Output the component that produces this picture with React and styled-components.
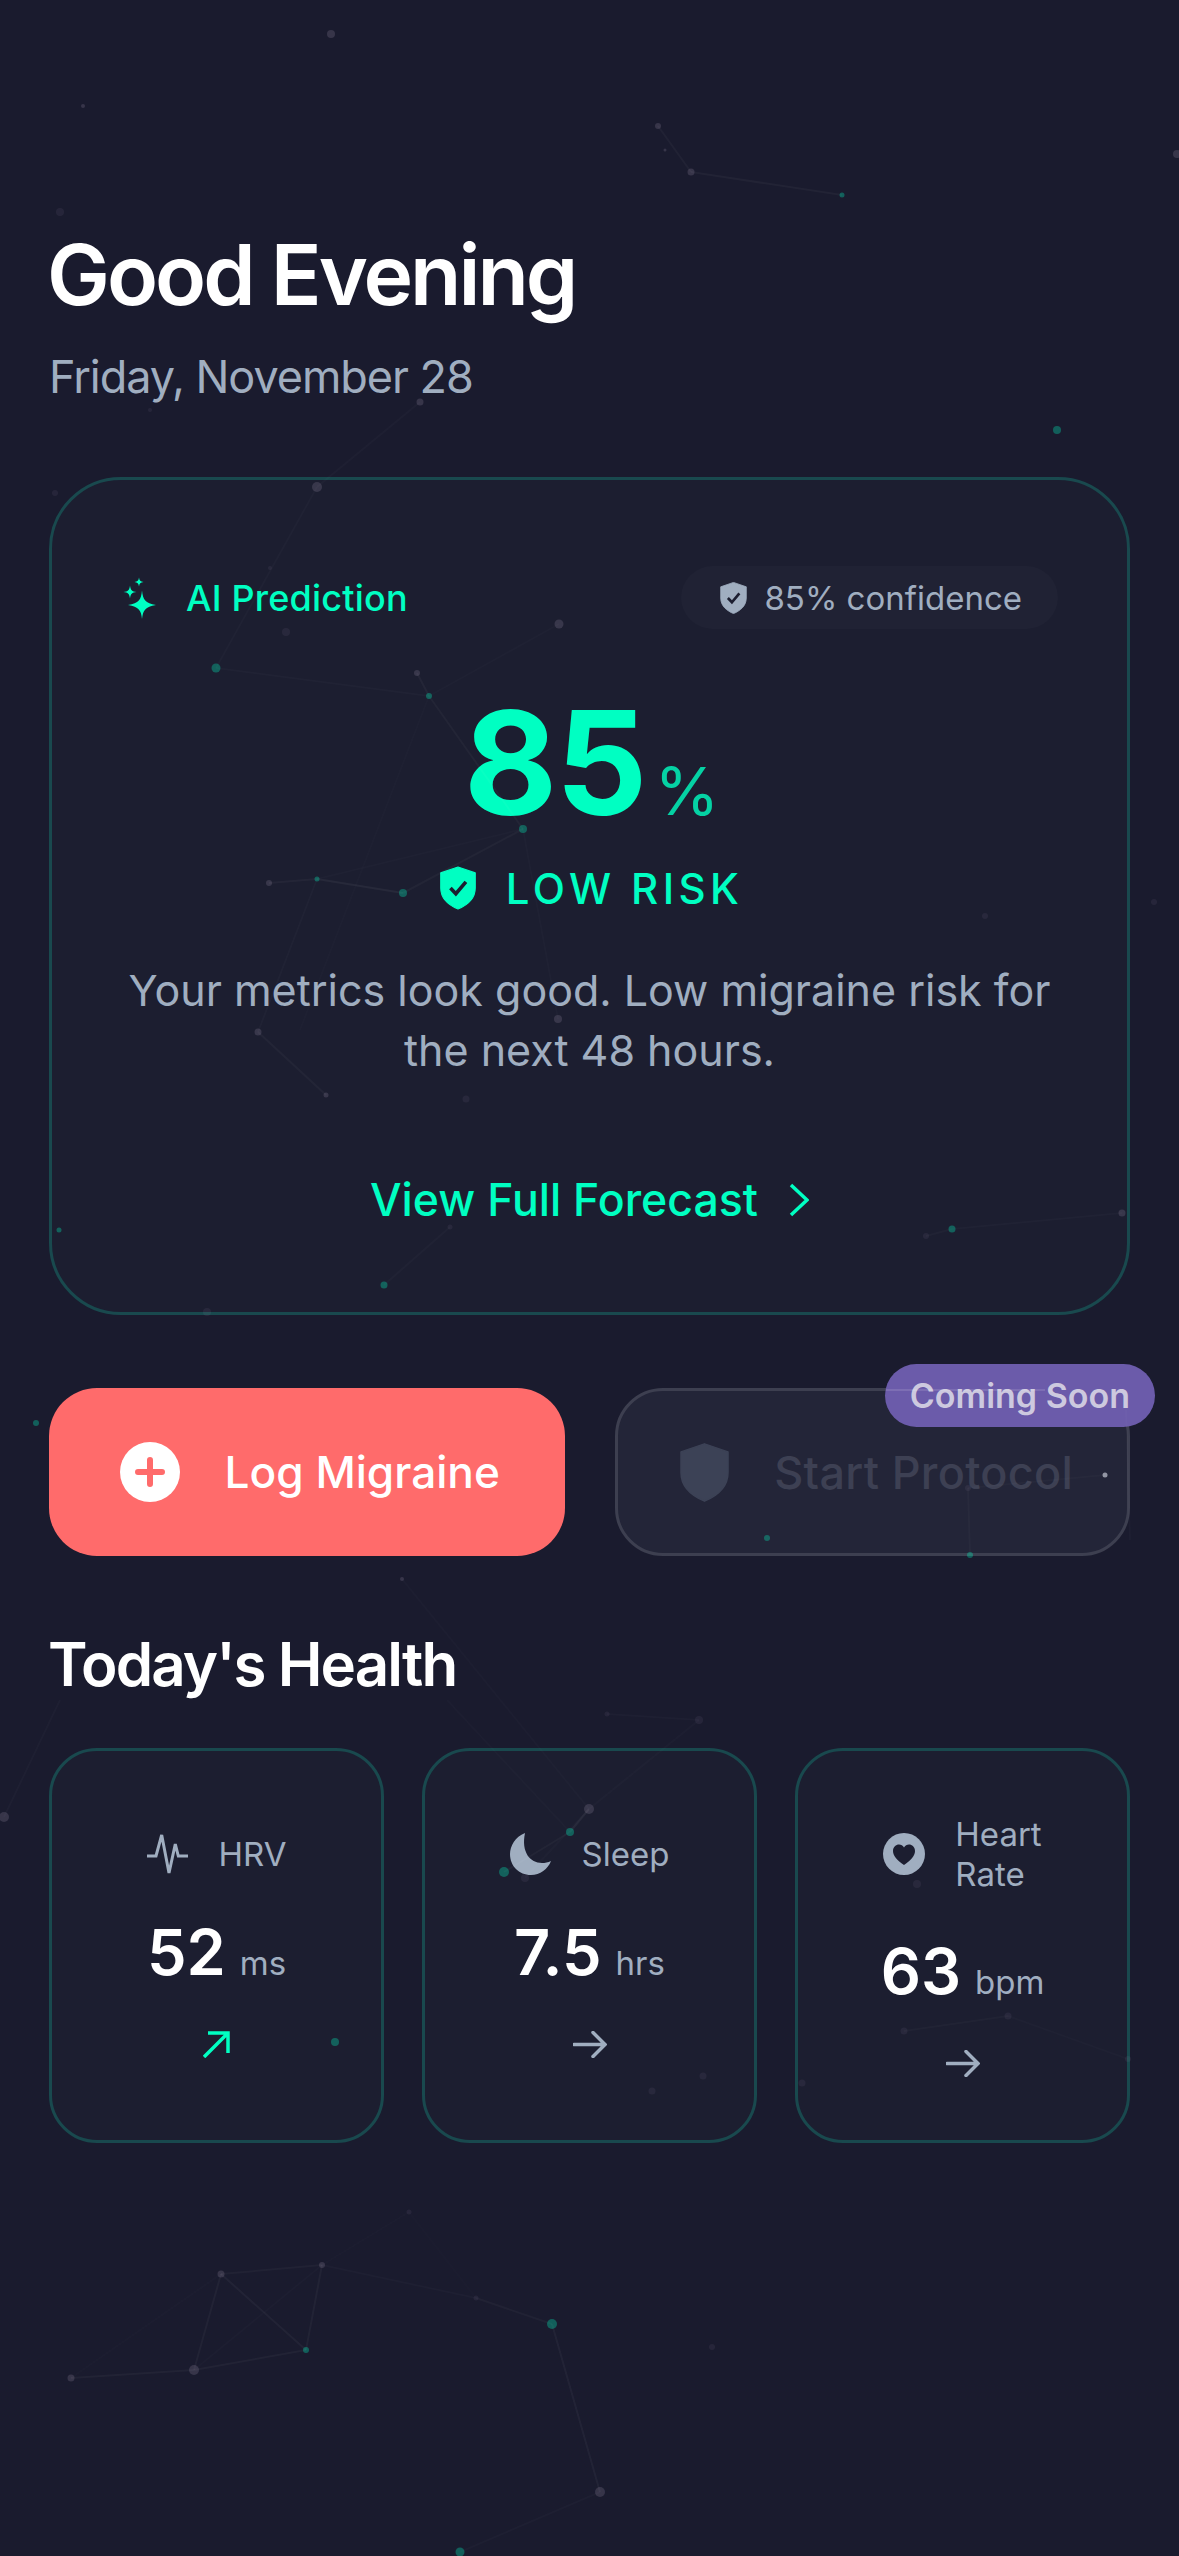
import React from 'react';
import styled, { createGlobalStyle } from 'styled-components';

const TEAL = '#00ffc2';
const GREY = '#a0aec0';
const BG = '#1a1b2e';
const CARD = '#1c1e30';

const GlobalStyle = createGlobalStyle`
  html, body {
    margin: 0;
    padding: 0;
    background: ${BG};
  }
  * {
    box-sizing: border-box;
  }
`;

// t = teal node, g = grey node
const nodes = [
  [331, 34, 4, 'g'], [83, 106, 2, 'g'], [658, 126, 3, 'g'], [665, 150, 1.5, 'g'], [691, 172, 3.5, 'g'],
  [842, 195, 2.5, 't'], [1177, 154, 4, 'g'], [60, 212, 4, 'f'], [420, 402, 3.5, 'g'], [150, 410, 2, 'f'],
  [1057, 430, 4, 't'], [317, 487, 5, 'g'], [55, 493, 3, 'f'], [216, 668, 4.5, 't'], [417, 673, 3, 'g'],
  [559, 624, 4.5, 'g'], [286, 632, 4, 'f'], [429, 696, 3, 't'], [270, 568, 2, 'f'], [523, 829, 4, 't'],
  [317, 879, 2.5, 't'], [269, 883, 3, 'g'], [403, 893, 4, 't'], [985, 916, 3, 'f'], [1154, 902, 3, 'f'],
  [558, 1019, 4, 'g'], [258, 1032, 3.5, 'g'], [326, 1095, 2.5, 'g'], [466, 1099, 3.5, 'f'],
  [59, 1230, 2.5, 't'], [450, 1227, 2.5, 'f'], [384, 1285, 3.5, 't'], [207, 1312, 4, 'f'],
  [926, 1236, 3, 'f'], [952, 1229, 3.5, 't'], [1122, 1213, 3.5, 'g'], [36, 1423, 3, 't'],
  [1105, 1475, 2.5, 'w'], [968, 1488, 3, 'f'], [767, 1538, 3, 't'], [970, 1555, 3, 't'], [402, 1579, 2, 'g'],
  [607, 1714, 2.5, 'f'], [699, 1720, 4, 'f'], [4, 1817, 5, 'g'], [589, 1809, 5, 'g'], [570, 1832, 4, 't'],
  [504, 1872, 5, 't'], [525, 1878, 4, 'f'], [917, 1884, 4, 'f'], [335, 2042, 4, 't'], [703, 2076, 3.5, 'f'],
  [652, 2091, 3.5, 'f'], [1008, 2016, 3.5, 'f'], [904, 2031, 3.5, 'f'], [1128, 2059, 3, 'f'], [802, 2083, 3.5, 'f'],
  [409, 2212, 2.5, 'f'], [322, 2265, 3, 'g'], [221, 2274, 3.5, 'g'], [476, 2298, 2.5, 'f'], [552, 2324, 5, 't'],
  [306, 2350, 3, 't'], [194, 2370, 5, 'g'], [71, 2378, 3.5, 'g'], [600, 2492, 5, 'g'], [460, 2552, 4.5, 't'],
  [712, 2347, 3, 'f'],
];

// x1, y1, x2, y2, opacity
const links = [
  [658, 126, 691, 172, 0.03], [691, 172, 842, 195, 0.035], [420, 402, 317, 487, 0.02], [317, 487, 216, 668, 0.018],
  [216, 668, 429, 696, 0.018], [417, 673, 429, 696, 0.035], [559, 624, 429, 696, 0.015], [429, 696, 523, 829, 0.03],
  [269, 883, 317, 879, 0.035], [317, 879, 403, 893, 0.05], [403, 893, 523, 829, 0.03], [317, 879, 523, 829, 0.015],
  [317, 879, 258, 1032, 0.02], [258, 1032, 326, 1095, 0.03], [429, 696, 300, 1030, 0.012], [523, 829, 558, 1019, 0.015],
  [450, 1227, 384, 1285, 0.02], [926, 1236, 952, 1229, 0.025], [952, 1229, 1122, 1213, 0.018],
  [968, 1488, 970, 1555, 0.025], [1105, 1475, 968, 1488, 0.02], [886, 1390, 1045, 1390, 0.12],
  [1126, 1410, 1130, 1540, 0.02], [402, 1579, 589, 1809, 0.015], [447, 1700, 570, 1832, 0.015],
  [607, 1714, 699, 1720, 0.02], [699, 1720, 589, 1809, 0.015], [589, 1809, 570, 1832, 0.05], [570, 1832, 504, 1872, 0.03],
  [589, 1809, 525, 1878, 0.015], [60, 1700, 4, 1817, 0.02], [904, 2031, 1008, 2016, 0.025], [1008, 2016, 1128, 2059, 0.015],
  [409, 2212, 322, 2265, 0.012], [322, 2265, 221, 2274, 0.03], [221, 2274, 306, 2350, 0.04], [322, 2265, 306, 2350, 0.035],
  [221, 2274, 194, 2370, 0.035], [322, 2265, 194, 2370, 0.015], [221, 2274, 71, 2378, 0.012], [71, 2378, 194, 2370, 0.035],
  [194, 2370, 306, 2350, 0.035], [322, 2265, 476, 2298, 0.02], [476, 2298, 552, 2324, 0.03], [552, 2324, 600, 2492, 0.04],
  [600, 2492, 460, 2552, 0.02], [409, 2212, 476, 2298, 0.008],
];

const nodeFill = {
  t: 'rgba(0, 255, 194, 0.3)',
  g: 'rgba(190, 170, 200, 0.18)',
  f: 'rgba(190, 170, 200, 0.08)',
  w: 'rgba(220, 225, 235, 0.6)',
};

function Particles() {
  return (
    <Canvas viewBox="0 0 1179 2556" width="1179" height="2556">
      {links.map(([x1, y1, x2, y2, o], i) => (
        <line key={i} x1={x1} y1={y1} x2={x2} y2={y2} stroke="#fff" strokeOpacity={o} strokeWidth="2" />
      ))}
      {nodes.map(([x, y, r, kind], i) => (
        <circle key={i} cx={x} cy={y} r={r} fill={nodeFill[kind]} />
      ))}
    </Canvas>
  );
}

function Sparkles() {
  return (
    <svg width="40" height="42" viewBox="0 0 40 42" fill={TEAL}>
      <path d="M21 13.5 C22 23 24 26 35 28 C24 30 22 33 21 42 C20 33 18 30 7 28 C18 26 20 23 21 13.5 Z" />
      <path d="M9 8.5 C9.5 13 11 14.5 15.5 15 C11 15.5 9.5 17 9 21.5 C8.5 17 7 15.5 2.5 15 C7 14.5 8.5 13 9 8.5 Z" />
      <path d="M18 .5 C18.4 3.5 19.5 4.6 22.5 5 C19.5 5.4 18.4 6.5 18 9.5 C17.6 6.5 16.5 5.4 13.5 5 C16.5 4.6 17.6 3.5 18 .5 Z" />
    </svg>
  );
}

function Shield({ width, height, fill, check }) {
  return (
    <svg width={width} height={height} viewBox="0 0 20 24">
      <path
        d="M10 .3 L19.6 3.6 V12 C19.6 18 15 21.6 10 23.7 C5 21.6 .4 18 .4 12 V3.6 Z"
        fill={fill}
        stroke={fill}
        strokeWidth=".6"
        strokeLinejoin="round"
      />
      {check && <path d="M5.8 12 L8.8 15.2 L14.4 8.6" fill="none" stroke={check} strokeWidth="2" />}
    </svg>
  );
}

function Chevron() {
  return (
    <svg width="20" height="34" viewBox="0 0 20 34" fill="none" stroke={TEAL} strokeWidth="3.5">
      <path d="M2 2 L18 17 L2 32" />
    </svg>
  );
}

function PlusCircle() {
  return (
    <svg width="60" height="60" viewBox="0 0 60 60">
      <circle cx="30" cy="30" r="30" fill="#fff" />
      <path d="M30 18 V42 M18 30 H42" stroke="#ff6b6b" strokeWidth="6" strokeLinecap="round" />
    </svg>
  );
}

function Pulse() {
  return (
    <svg width="42" height="42" viewBox="0 0 42 42" fill="none" stroke={GREY} strokeWidth="3">
      <path d="M0 23 H9 L14.7 2 L22 40 L28.3 11 L31.3 23 H41" />
    </svg>
  );
}

function Moon() {
  return (
    <svg width="42" height="42" viewBox="0 0 42 42" fill={GREY}>
      <path d="M15 0 C5 4 0 13 0 21 C0 33 9 42 21 42 C30 42 38 36 41 28 C38 29.5 35 30 32 30 C20 30 11 19 15 0 Z" />
    </svg>
  );
}

function HeartBadge() {
  return (
    <svg width="42" height="42" viewBox="0 0 42 42">
      <circle cx="21" cy="21" r="21" fill={GREY} />
      <path
        d="M21 32 C14 27 10 23 10 18 C10 14 13 11.5 16 11.5 C18 11.5 20 12.5 21 14.5 C22 12.5 24 11.5 26 11.5 C29 11.5 32 14 32 18 C32 23 28 27 21 32 Z"
        fill={CARD}
      />
    </svg>
  );
}

function ArrowUpRight() {
  return (
    <svg width="27" height="27" viewBox="0 0 27 27" fill="none" stroke={TEAL} strokeWidth="3.5">
      <path d="M1 26 L24 3 M5 2 H25 V22" />
    </svg>
  );
}

function ArrowRight() {
  return (
    <svg width="34" height="27" viewBox="0 0 34 27" fill="none" stroke={GREY} strokeWidth="3.5" strokeLinecap="round">
      <path d="M1 13.5 H32 M20 1.5 L32 13.5 L20 25.5" />
    </svg>
  );
}

const metrics = [
  { id: 'hrv', icon: <Pulse />, label: 'HRV', value: '52', unit: 'ms', trend: <ArrowUpRight /> },
  { id: 'sleep', icon: <Moon />, label: 'Sleep', value: '7.5', unit: 'hrs', trend: <ArrowRight /> },
  { id: 'heart', icon: <HeartBadge />, label: 'Heart Rate', value: '63', unit: 'bpm', trend: <ArrowRight /> },
];

export default function App() {
  return (
    <Screen>
      <GlobalStyle />
      <Content>
        <Title>Good Evening</Title>
        <DateLine>Friday, November 28</DateLine>

        <PredictionCard>
          <CardHeader>
            <AiTag>
              <Sparkles />
              AI Prediction
            </AiTag>
            <Confidence>
              <Shield width={27} height={32} fill={GREY} check={CARD} />
              85% confidence
            </Confidence>
          </CardHeader>

          <Score>
            <ScoreValue>85</ScoreValue>
            <ScoreUnit>%</ScoreUnit>
          </Score>

          <Risk>
            <Shield width={36} height={44} fill={TEAL} check={CARD} />
            LOW RISK
          </Risk>

          <Summary>
            Your metrics look good. Low migraine risk for
            <br />
            the next 48 hours.
          </Summary>

          <ForecastLink>
            View Full Forecast
            <Chevron />
          </ForecastLink>
        </PredictionCard>

        <Actions>
          <LogButton>
            <PlusCircle />
            Log Migraine
          </LogButton>
          <ProtocolButton>
            <Shield width={49} height={59} fill="#3c4256" />
            Start Protocol
            <SoonBadge>Coming Soon</SoonBadge>
          </ProtocolButton>
        </Actions>

        <SectionTitle>Today's Health</SectionTitle>

        <MetricGrid>
          {metrics.map((m) => (
            <MetricCard key={m.id}>
              <MetricHead>
                {m.icon}
                <MetricLabel>{m.label}</MetricLabel>
              </MetricHead>
              <MetricValueRow>
                <MetricValue>{m.value}</MetricValue>
                <MetricUnit>{m.unit}</MetricUnit>
              </MetricValueRow>
              <MetricTrend>{m.trend}</MetricTrend>
            </MetricCard>
          ))}
        </MetricGrid>
      </Content>
      <Particles />
    </Screen>
  );
}

const Screen = styled.div`
  position: relative;
  width: 1179px;
  height: 2556px;
  overflow: hidden;
  background: ${BG};
  font-family: Inter, 'Liberation Sans', sans-serif;
`;

const Canvas = styled.svg`
  position: absolute;
  top: 0;
  left: 0;
  pointer-events: none;
`;

const Content = styled.div`
  padding: 225px 49px 0;
`;

const Title = styled.h1`
  margin: 0 0 0 -2px;
  font-size: 84px;
  line-height: 100px;
  font-weight: 600;
  letter-spacing: -3px;
  color: #fff;
`;

const DateLine = styled.div`
  margin-top: 22px;
  font-size: 45px;
  line-height: 60px;
  letter-spacing: -1.05px;
  color: ${GREY};
`;

const PredictionCard = styled.section`
  margin-top: 70px;
  padding: 86px 69px 82px;
  border: 3px solid #19494e;
  border-radius: 72px;
  background: ${CARD};
`;

const CardHeader = styled.div`
  display: flex;
  align-items: center;
  justify-content: space-between;
  height: 63px;
`;

const AiTag = styled.div`
  display: flex;
  align-items: center;
  gap: 25px;
  font-size: 36px;
  font-weight: 500;
  letter-spacing: 0.2px;
  color: ${TEAL};
`;

const Confidence = styled.div`
  display: flex;
  align-items: center;
  gap: 17px;
  height: 63px;
  padding: 0 36px 0 39px;
  border-radius: 32px;
  background: rgba(255, 255, 255, 0.02);
  font-size: 33px;
  color: ${GREY};
`;

const Score = styled.div`
  display: flex;
  align-items: baseline;
  justify-content: center;
  gap: 9px;
  margin-top: 62px;
  padding-left: 2px;
  height: 144px;
  letter-spacing: -2px;
`;

const ScoreValue = styled.span`
  font-size: 144px;
  line-height: 144px;
  font-weight: 700;
  color: ${TEAL};
`;

const ScoreUnit = styled.span`
  font-size: 66px;
  line-height: 1;
  font-weight: 400;
  color: ${TEAL};
  opacity: 0.8;
`;

const Risk = styled.div`
  display: flex;
  align-items: center;
  justify-content: center;
  gap: 30px;
  margin-top: 27px;
  padding-left: 4px;
  height: 52px;
  font-size: 42px;
  font-weight: 500;
  letter-spacing: 4.4px;
  color: ${TEAL};
`;

const Summary = styled.p`
  margin: 46px -30px 0;
  font-size: 43px;
  line-height: 60px;
  text-align: center;
  color: ${GREY};
`;

const ForecastLink = styled.div`
  display: flex;
  align-items: center;
  justify-content: center;
  gap: 31px;
  margin-top: 90px;
  height: 60px;
  font-size: 44.6px;
  font-weight: 500;
  color: ${TEAL};
`;

const Actions = styled.div`
  display: grid;
  grid-template-columns: 1fr 1fr;
  gap: 50px;
  margin-top: 73px;
`;

const ActionButton = styled.div`
  display: flex;
  align-items: center;
  justify-content: center;
  gap: 45px;
  height: 168px;
  border-radius: 48px;
  font-weight: 500;
`;

const LogButton = styled(ActionButton)`
  padding-left: 6px;
  background: #ff6b6b;
  font-size: 44.2px;
  color: #fff;
`;

const ProtocolButton = styled(ActionButton)`
  position: relative;
  padding-left: 9px;
  background: #232538;
  border: 3px solid #3d3f50;
  font-size: 45px;
  letter-spacing: 0.3px;
  color: #3d4053;
`;

const SoonBadge = styled.span`
  position: absolute;
  top: -27px;
  right: -28px;
  display: flex;
  align-items: center;
  height: 63px;
  padding: 0 25px;
  border-radius: 32px;
  background: #6b5baa;
  font-size: 34px;
  font-weight: 600;
  letter-spacing: 0;
  color: #cdc9df;
`;

const SectionTitle = styled.h2`
  margin: 68px 0 0 -1px;
  font-size: 60px;
  line-height: 80px;
  font-weight: 600;
  letter-spacing: -1.9px;
  color: #fff;
`;

const MetricGrid = styled.div`
  display: grid;
  grid-template-columns: repeat(3, 1fr);
  gap: 38px;
  margin-top: 44px;
`;

const MetricCard = styled.div`
  display: flex;
  flex-direction: column;
  align-items: center;
  justify-content: center;
  height: 395px;
  border: 3px solid #19494e;
  border-radius: 48px;
  background: ${CARD};
`;

const MetricHead = styled.div`
  display: flex;
  align-items: center;
  gap: 30px;
`;

const MetricLabel = styled.span`
  width: min-content;
  font-size: 33px;
  line-height: 40px;
  color: ${GREY};
`;

const MetricValueRow = styled.div`
  display: flex;
  align-items: baseline;
  gap: 14px;
  margin-top: 44px;
`;

const MetricValue = styled.span`
  font-size: 63px;
  line-height: 66px;
  font-weight: 600;
  color: #fff;
`;

const MetricUnit = styled.span`
  font-size: 33px;
  line-height: 1;
  color: ${GREY};
`;

const MetricTrend = styled.div`
  display: flex;
  margin-top: 46px;
`;
